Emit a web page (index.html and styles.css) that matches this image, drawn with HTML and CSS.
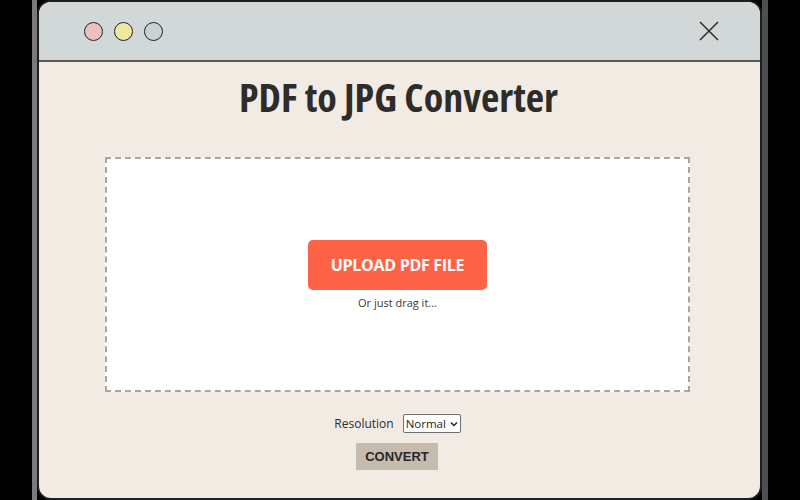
FILE: index.html
```html
<!DOCTYPE html>
<html>
<head>
<meta charset="utf-8">
<link rel="stylesheet" href="styles.css">
</head>
<body>
<div class="stage">
  <div class="shadow-left"></div>
  <div class="window">
    <div class="titlebar">
      <span class="dot dot-red"></span>
      <span class="dot dot-yellow"></span>
      <span class="dot dot-gray"></span>
      <svg class="close" width="20" height="20" viewBox="0 0 20 20"><path d="M1 1 L19 19 M19 1 L1 19" stroke="#2b2b2b" stroke-width="1.5" fill="none"/></svg>
    </div>
    <div class="content">
      <h1 class="title">PDF to JPG Converter</h1>
      <div class="dropzone">
        <button class="upload">UPLOAD PDF FILE</button>
        <div class="hint">Or just drag it...</div>
      </div>
      <div class="options">
        <label class="res-label">Resolution</label>
        <select class="res-select"><option>Normal</option></select>
      </div>
      <button class="convert">CONVERT</button>
    </div>
  </div>
  <div class="shadow-right"></div>
</div>
</body>
</html>
```
FILE: styles.css
```css
html, body {
  margin: 0;
  padding: 0;
  background: #000;
}
.stage {
  width: 800px;
  height: 500px;
  display: flex;
  padding-left: 32px;
  box-sizing: border-box;
}
.shadow-left {
  width: 5px;
  height: 500px;
  background: #7b7b7b;
}
.shadow-right {
  width: 6px;
  height: 500px;
  background: #4e4f4f;
}
.window {
  width: 725px;
  height: 500px;
  box-sizing: border-box;
  border: 2px solid #1f1f1f;
  border-radius: 14px;
  overflow: hidden;
  background: #f2ebe3;
  display: flex;
  flex-direction: column;
}
.titlebar {
  height: 58px;
  flex: none;
  background: #d2d7d8;
  border-bottom: 2px solid #5b5b5b;
  display: flex;
  align-items: center;
  padding-left: 45px;
  padding-right: 41px;
  gap: 11px;
}
.dot {
  width: 17px;
  height: 17px;
  border-radius: 50%;
  border: 1.5px solid #222;
  flex: none;
}
.dot-red { background: #eebfbf; }
.dot-yellow { background: #ecea9e; }
.dot-gray { background: #c9d2d5; }
.close {
  margin-left: auto;
}
.content {
  display: flex;
  flex-direction: column;
  align-items: flex-start;
}
.title {
  margin: 11px 0 0 0;
  width: 100%;
  text-align: center;
  font-family: "Open Sans", sans-serif;
  font-weight: 700;
  font-stretch: 75%;
  font-size: 40px;
  line-height: 48px;
  color: #2e2c29;
  letter-spacing: 0;
  padding-right: 2px;
  box-sizing: border-box;
}
.dropzone {
  margin: 36px 0 0 66px;
  width: 585px;
  height: 235px;
  box-sizing: border-box;
  background: #fff;
  border: 2px dashed #a9a6a2;
  display: flex;
  flex-direction: column;
  align-items: center;
  justify-content: center;
  gap: 6px;
}
.upload {
  width: 179px;
  height: 50px;
  border: none;
  border-radius: 5px;
  background: #fe6348;
  color: #fff;
  font-family: "Open Sans", sans-serif;
  font-weight: 700;
  font-size: 16px;
  letter-spacing: -0.3px;
  padding: 0;
}
.hint {
  font-family: "Open Sans", sans-serif;
  font-size: 11px;
  color: #3c3a38;
  line-height: 14px;
}
.options {
  margin-top: 22px;
  width: 100%;
  display: flex;
  justify-content: center;
  align-items: center;
  gap: 9px;
  padding-right: 4px;
  box-sizing: border-box;
}
.res-label {
  font-family: "Open Sans", sans-serif;
  font-size: 12px;
  color: #2e2c29;
}
.res-select {
  -webkit-appearance: none;
  appearance: none;
  font-family: "Open Sans", sans-serif;
  font-size: 11.5px;
  height: 19px;
  width: 58px;
  padding: 0 0 0 2px;
  border: 1px solid #6f6f6f;
  border-radius: 2px;
  background: #fff url("data:image/svg+xml;utf8,<svg xmlns='http://www.w3.org/2000/svg' width='8' height='6' viewBox='0 0 8 6'><path d='M1 1.5 L4 4.5 L7 1.5' stroke='%23222' stroke-width='1.4' fill='none'/></svg>") no-repeat right 2px center;
  color: #222;
  line-height: 17px;
}
.convert {
  margin: 10px 0 0 317px;
  width: 82px;
  height: 27px;
  border: none;
  border-radius: 0;
  background: #c6bbaf;
  color: #262626;
  font-family: "Liberation Sans", Arial, sans-serif;
  font-weight: 700;
  font-size: 13px;
  padding: 0;
}
```
